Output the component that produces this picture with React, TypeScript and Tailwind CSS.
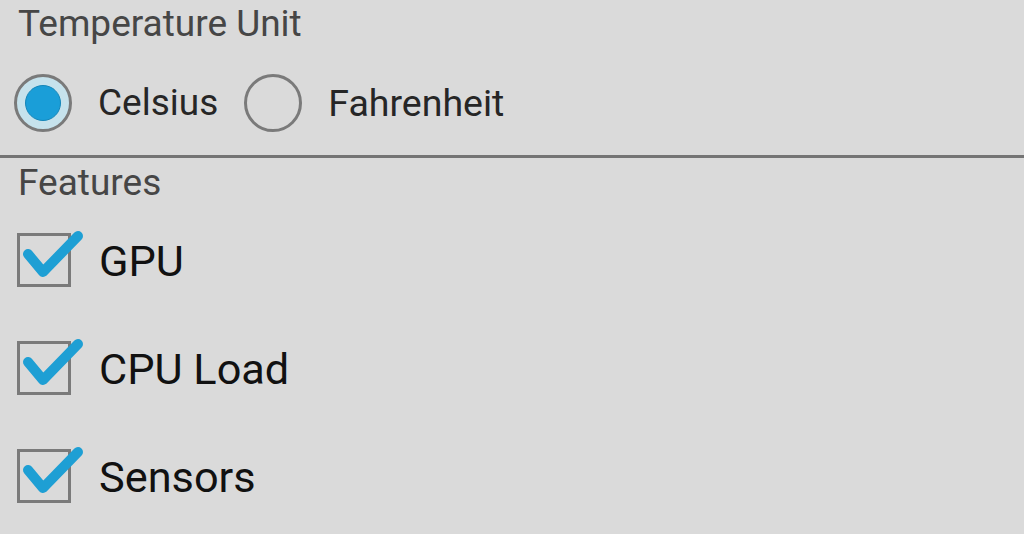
import React from "react";

const FEATURES = ["GPU", "CPU Load", "Sensors"];

function Radio({ checked }: { checked: boolean }) {
  return (
    <span
      className={`flex h-[58px] w-[58px] shrink-0 items-center justify-center rounded-full border-[3px] border-[#7a7a7a] ${
        checked ? "bg-[#c6e2ec]" : "bg-transparent"
      }`}
    >
      {checked && <span className="h-[36px] w-[36px] rounded-full border border-[#1586b8] bg-[#1a9ed8]" />}
    </span>
  );
}

function Check() {
  return (
    <span className="relative ml-[17px] mt-[-4px] h-[54px] w-[54px] shrink-0 border-[3px] border-[#7a7a7a]">
      <svg className="absolute left-[-3px] top-[-3px] overflow-visible" width="70" height="50" viewBox="0 0 70 50">
        <path
          d="M11 21 L26 39 L61 3"
          fill="none"
          stroke="#1e9fd4"
          strokeWidth="10"
          strokeLinecap="round"
          strokeLinejoin="round"
        />
      </svg>
    </span>
  );
}

export default function App() {
  return (
    <div
      className="flex h-[534px] w-[1024px] flex-col overflow-hidden bg-[#dadada]"
      style={{ fontFamily: "Roboto, 'Noto Sans', sans-serif" }}
    >
      <div className="pl-[18px] pt-[2px] text-[37px] leading-[44px] text-[#464646]">
        Temperature Unit
      </div>
      <div className="flex items-center pl-[14px] pt-[28px] pb-[23px]">
        <Radio checked />
        <span className="mx-[26px] text-[37px] leading-[44px] text-[#262626]">Celsius</span>
        <Radio checked={false} />
        <span className="ml-[26px] text-[37.5px] leading-[44px] text-[#262626]">Fahrenheit</span>
      </div>
      <div className="h-[3px] bg-[#747474]" />
      <div className="pl-[18px] pt-[3px] text-[37px] leading-[44px] text-[#464646]">Features</div>
      <div className="mt-[3px] flex flex-col">
        {FEATURES.map((f) => (
          <div key={f} className="flex h-[108px] items-center">
            <Check />
            <span className="ml-[28px] text-[43.3px] leading-[52px] text-[#111111]">{f}</span>
          </div>
        ))}
      </div>
    </div>
  );
}
